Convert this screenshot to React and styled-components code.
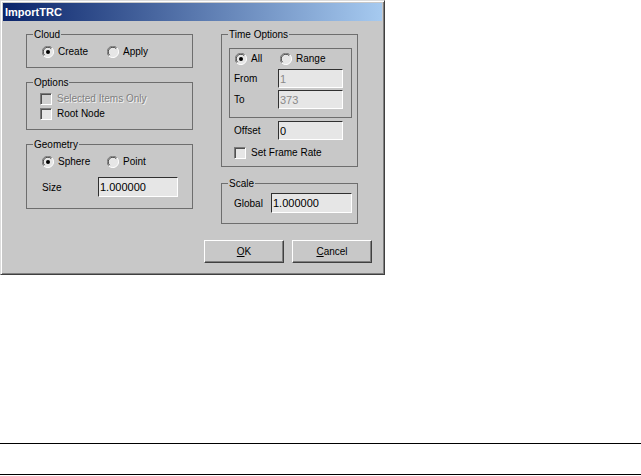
import styled, { createGlobalStyle } from 'styled-components';

const face = '#c8c8c8';
const groupLine = '#6e6e6e';

const GlobalStyle = createGlobalStyle`
  body {
    margin: 0;
    background: #fff;
    font-family: "Liberation Sans", Arial, sans-serif;
  }
`;

export default function App() {
  return (
    <>
      <GlobalStyle />
      <Window>
        <TitleBar>
          <Title>ImportTRC</Title>
        </TitleBar>

        <Body>
          <Columns>
            <Column $width={167} $gap={8}>
              <Group>
                <Legend>Cloud</Legend>
                <GroupContent $pad="5px 0 9px 15px">
                  <RadioRow $col={65}>
                    <Radio checked>Create</Radio>
                    <Radio>Apply</Radio>
                  </RadioRow>
                </GroupContent>
              </Group>

              <Group>
                <Legend>Options</Legend>
                <GroupContent $pad="4px 0 9px 13px" $gap={3}>
                  <Check disabled>Selected Items Only</Check>
                  <Check>Root Node</Check>
                </GroupContent>
              </Group>

              <Group>
                <Legend>Geometry</Legend>
                <GroupContent $pad="5px 0 11px 15px" $gap={9}>
                  <RadioRow $col={65}>
                    <Radio checked>Sphere</Radio>
                    <Radio>Point</Radio>
                  </RadioRow>
                  <FieldRow $label={56}>
                    <FieldLabel>Size</FieldLabel>
                    <TextInput $width={80} $height={20} defaultValue="1.000000" />
                  </FieldRow>
                </GroupContent>
              </Group>
            </Column>

            <Column $width={137} $gap={10}>
              <Group>
                <Legend>Time Options</Legend>
                <GroupContent $pad="7px 5px 7px 7px">
                  <Inset>
                    <RadioRow $col={45} $indent={1}>
                      <Radio checked>All</Radio>
                      <Radio>Range</Radio>
                    </RadioRow>
                    <FieldRow $label={44} $top={4}>
                      <FieldLabel>From</FieldLabel>
                      <TextInput $width={65} $height={19} $disabled defaultValue="1" readOnly />
                    </FieldRow>
                    <FieldRow $label={44} $top={2}>
                      <FieldLabel>To</FieldLabel>
                      <TextInput $width={65} $height={19} $disabled defaultValue="373" readOnly />
                    </FieldRow>
                  </Inset>
                  <Indented $left={5}>
                    <FieldRow $label={44} $top={3}>
                      <FieldLabel>Offset</FieldLabel>
                      <TextInput $width={65} $height={19} defaultValue="0" />
                    </FieldRow>
                    <CheckSpacer>
                      <Check>Set Frame Rate</Check>
                    </CheckSpacer>
                  </Indented>
                </GroupContent>
              </Group>

              <Group>
                <Legend>Scale</Legend>
                <GroupContent $pad="3px 0 10px 12px">
                  <FieldRow $label={37}>
                    <FieldLabel>Global</FieldLabel>
                    <TextInput $width={81} $height={20} defaultValue="1.000000" />
                  </FieldRow>
                </GroupContent>
              </Group>
            </Column>
          </Columns>

          <ButtonBar>
            <Button type="button">
              <u>O</u>K
            </Button>
            <Button type="button">
              <u>C</u>ancel
            </Button>
          </ButtonBar>
        </Body>
      </Window>

      <Rule $top={168} />
      <Rule $top={30} />
    </>
  );
}

function Radio({ checked, children }) {
  return (
    <ChoiceLabel $gap={4}>
      <svg width="12" height="12" viewBox="0 0 12 12">
        <circle cx="6" cy="6" r="5.5" fill="#e6e6e6" />
        <path d="M1.8 9.9 A5.3 5.3 0 0 1 9.9 1.8" fill="none" stroke="#7a7a7a" strokeWidth="1" />
        <path d="M2.6 9.2 A4.5 4.5 0 0 1 9.2 2.6" fill="none" stroke="#404040" strokeWidth="1" />
        <path d="M9.9 1.8 A5.3 5.3 0 0 1 1.8 9.9" fill="none" stroke="#ffffff" strokeWidth="1" />
        {checked && <circle cx="6" cy="6" r="2" fill="#000" />}
      </svg>
      <span>{children}</span>
    </ChoiceLabel>
  );
}

function Check({ disabled, children }) {
  return (
    <ChoiceLabel $gap={5} $disabled={disabled}>
      <CheckBox $disabled={disabled} />
      <span>{children}</span>
    </ChoiceLabel>
  );
}

const Window = styled.div`
  box-sizing: border-box;
  width: 385px;
  height: 275px;
  padding: 2px;
  background: ${face};
  border: 1px solid;
  border-color: #dcdcdc #404040 #404040 #dcdcdc;
  box-shadow: inset 1px 1px #ffffff, inset -1px -1px #808080;
  display: flex;
  flex-direction: column;
`;

const TitleBar = styled.div`
  height: 18px;
  display: flex;
  align-items: center;
  padding-left: 2px;
  background: linear-gradient(to right, #0a246a, #a6caf0);
`;

const Title = styled.span`
  color: #fff;
  font-size: 11px;
  font-weight: bold;
`;

const Body = styled.div`
  display: flex;
  flex-direction: column;
  padding: 7px 10px 0 23px;
  font-size: 10px;
  color: #000;
`;

const Columns = styled.div`
  display: flex;
  align-items: flex-start;
  gap: 28px;
`;

const Column = styled.div`
  width: ${(p) => p.$width}px;
  display: flex;
  flex-direction: column;
  gap: ${(p) => p.$gap}px;
`;

const Group = styled.fieldset`
  margin: 0;
  padding: 0;
  min-width: 0;
  border: 1px solid ${groupLine};
`;

const Legend = styled.legend`
  margin-left: 6px;
  padding: 0 1px;
  font-size: 10px;
  line-height: 13px;
`;

const GroupContent = styled.div`
  display: flex;
  flex-direction: column;
  gap: ${(p) => p.$gap || 0}px;
  padding: ${(p) => p.$pad};
`;

const Inset = styled.div`
  border: 1px solid ${groupLine};
  padding: 4px 8px 8px 4px;
  display: flex;
  flex-direction: column;
`;

const Indented = styled.div`
  display: flex;
  flex-direction: column;
  padding-left: ${(p) => p.$left}px;
`;

const CheckSpacer = styled.div`
  margin-top: 7px;
`;

const RadioRow = styled.div`
  display: grid;
  grid-template-columns: ${(p) => p.$col}px auto;
  height: 12px;
  margin-left: ${(p) => p.$indent || 0}px;
`;

const ChoiceLabel = styled.label`
  display: flex;
  align-items: center;
  gap: ${(p) => p.$gap}px;
  height: 12px;
  line-height: 12px;
  white-space: nowrap;
  color: ${(p) => (p.$disabled ? '#808080' : '#000')};
  text-shadow: ${(p) => (p.$disabled ? '1px 1px #f4f4f4' : 'none')};

  svg {
    flex: none;
  }
`;

const CheckBox = styled.span`
  box-sizing: border-box;
  width: 12px;
  height: 12px;
  flex: none;
  background: ${(p) => (p.$disabled ? '#d0d0d0' : '#e6e6e6')};
  border: 1px solid;
  border-color: #7a7a7a #ffffff #ffffff #7a7a7a;
  box-shadow: inset 1px 1px #505050;
`;

const FieldRow = styled.div`
  display: grid;
  grid-template-columns: ${(p) => p.$label}px auto;
  align-items: center;
  margin-top: ${(p) => p.$top || 0}px;
`;

const FieldLabel = styled.span`
  font-size: 10px;
`;

const TextInput = styled.input`
  box-sizing: border-box;
  width: ${(p) => p.$width}px;
  height: ${(p) => p.$height}px;
  margin: 0;
  padding: 0 0 0 1px;
  font-family: "Liberation Sans", Arial, sans-serif;
  font-size: 11px;
  color: ${(p) => (p.$disabled ? '#8a8a8a' : '#000')};
  background: #e6e6e6;
  border: 1px solid;
  border-color: #303030 #ffffff #ffffff #303030;
  outline: none;
`;

const ButtonBar = styled.div`
  display: flex;
  justify-content: flex-end;
  gap: 8px;
  margin-top: 16px;
`;

const Button = styled.button`
  box-sizing: border-box;
  width: 80px;
  height: 23px;
  margin: 0;
  padding: 0;
  font-family: "Liberation Sans", Arial, sans-serif;
  font-size: 10px;
  color: #000;
  background: ${face};
  border: 1px solid;
  border-color: #ffffff #404040 #404040 #ffffff;
  box-shadow: inset -1px -1px #808080;
`;

const Rule = styled.div`
  height: 1px;
  margin-top: ${(p) => p.$top}px;
  background: #000;
`;
